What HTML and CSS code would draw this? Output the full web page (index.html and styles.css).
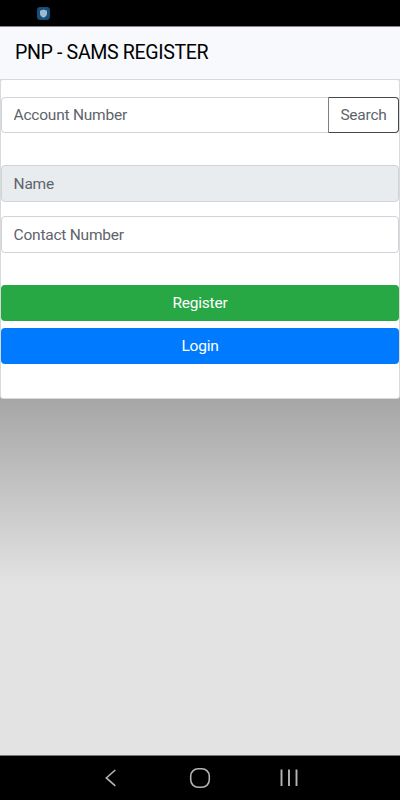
FILE: index.html
```html
<!DOCTYPE html>
<html lang="en">
<head>
<meta charset="utf-8">
<title>PNP - SAMS REGISTER</title>
<link rel="stylesheet" href="styles.css">
</head>
<body>
<div class="status">
  <svg class="shield" width="13" height="13" viewBox="0 0 13 13"><rect width="13" height="13" rx="3.4" fill="#15507d"/><path d="M6.5 2.6 10 3.7v3c0 2-1.5 3.2-3.5 4C4.500 9.900 3 8.700 3 6.700v-3z" fill="#9eb9d2"/><path d="M6.500 4.300v3.400" stroke="#b9b1ae" stroke-width="1.200"/></svg>
</div>
<header class="navbar"><span class="brand">PNP - SAMS REGISTER</span></header>
<main class="main">
  <form class="card">
    <div class="group">
      <input class="field joined" type="text" placeholder="Account Number">
      <button class="search" type="button">Search</button>
    </div>
    <input class="field name" type="text" placeholder="Name" readonly>
    <input class="field contact" type="text" placeholder="Contact Number">
    <button class="btn register" type="button">Register</button>
    <button class="btn login" type="button">Login</button>
  </form>
</main>
<nav class="system">
  <svg width="400" height="44" viewBox="0 0 400 44" fill="none" stroke="#b4b4b4" stroke-width="1.600">
    <path d="M115.300 14 106.300 21.900 115.300 29.800"/>
    <rect x="190.700" y="12.700" width="18.600" height="18.600" rx="7.500"/>
    <path d="M281.500 13.500v16.500M289 13.500v16.500M296.500 13.500v16.500" stroke-width="1.900"/>
  </svg>
</nav>
</body>
</html>
```
FILE: styles.css
```css
* { box-sizing: border-box; }
body {
  margin: 0;
  height: 800px;
  display: flex;
  flex-direction: column;
  overflow: hidden;
  font-family: Roboto, sans-serif;
  font-size: 15.5px;
  letter-spacing: -0.23px;
  background: #e3e3e3;
}
.status { flex: none; height: 26px; padding: 7px 0 0 37px; background: #000; }
.shield { display: block; }
.navbar {
  flex: none;
  height: 53px;
  padding: 0 0 2px 15px;
  display: flex;
  align-items: center;
  background: #f8f9fc;
  border-top: 1px solid #858688;
}
.brand { font-size: 19.6px; letter-spacing: -0.37px; color: #000; }
.main {
  flex: 1;
  background: linear-gradient(#d8d9da 4px, #a6a6a6 4px, #a6a6a6 320px, #e3e3e3 506px);
}
.card {
  height: 320px;
  padding-top: 17px;
  display: flex;
  flex-direction: column;
  background: #fff;
  border: 1px solid #d8d9da;
  border-radius: 3px;
}
.group { display: flex; height: 36px; margin-bottom: 32px; }
.field {
  width: 100%;
  height: 37px;
  flex: none;
  padding: 1px 12px 0 11.600px;
  font: inherit;
  letter-spacing: inherit;
  color: #495057;
  background: #fff;
  border: 1px solid #ced4da;
  border-radius: 4px;
  outline: none;
}
.field::placeholder { color: #5d646b; opacity: 1; }
.joined { flex: 1; width: auto; min-width: 0; height: 36px; padding-top: 0; border-radius: 4px 0 0 4px; }
.search {
  width: 71px;
  margin-left: -1px;
  padding: 0;
  font: inherit;
  letter-spacing: inherit;
  color: #5d646b;
  background: #fff;
  border: 1px solid #43484d;
  border-left-color: #7b7f83;
  border-radius: 0 4px 4px 0;
}
.name { margin-bottom: 14px; background: #e9ecef; }
.contact { margin-bottom: 31.600px; }
.btn {
  flex: none;
  height: 36px;
  padding: 0;
  font: inherit;
  letter-spacing: inherit;
  color: #fff;
  border: 0;
  border-radius: 4px;
}
.register { margin-bottom: 7.400px; background: #28a745; }
.login { background: #007bff; }
.system { flex: none; height: 45px; background: #000; border-top: 1px solid #777; }
.system svg { display: block; }
```
